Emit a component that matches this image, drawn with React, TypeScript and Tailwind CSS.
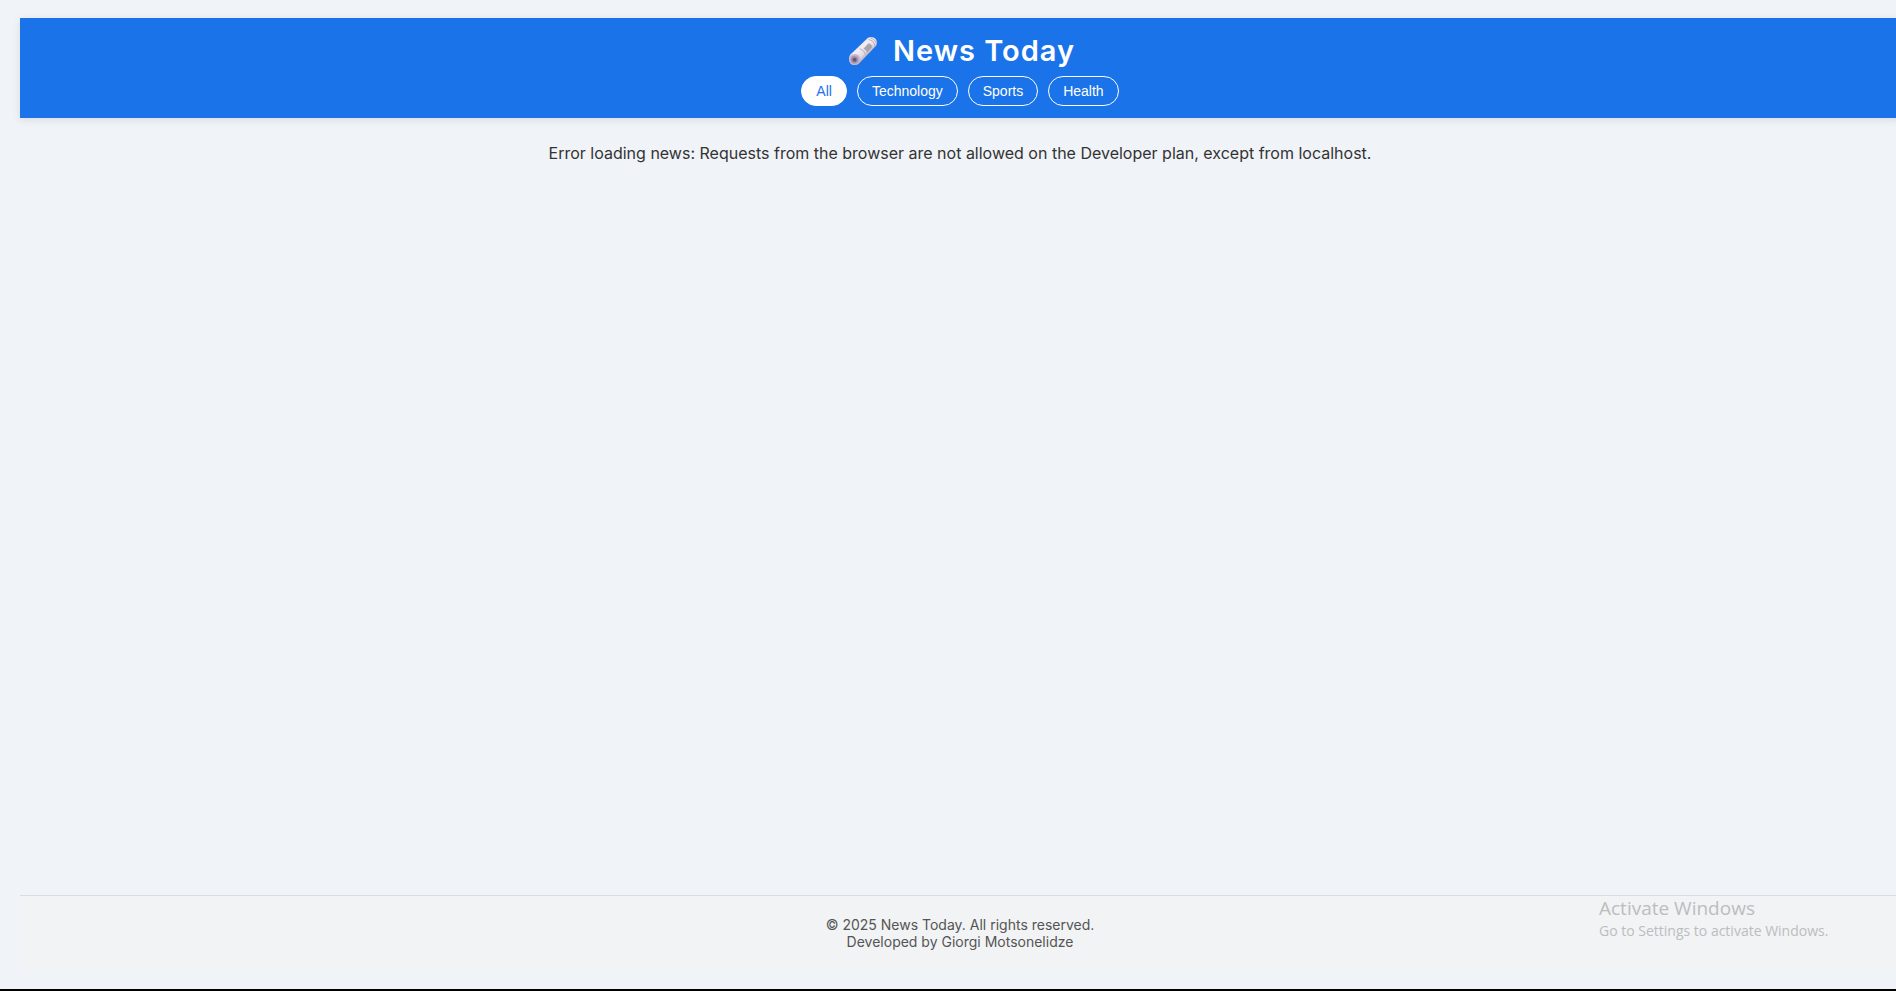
import { useState } from "react";

const categories = ["All", "Technology", "Sports", "Health"];

function RolledNewspaper() {
  return (
    <svg viewBox="0 0 28 28" className="h-7 w-7 shrink-0" aria-hidden="true">
      <defs>
        <linearGradient id="roll" x1="8" y1="7" x2="19" y2="19" gradientUnits="userSpaceOnUse">
          <stop offset="0" stopColor="#cfc4d6" />
          <stop offset="0.3" stopColor="#f3eff5" />
          <stop offset="0.7" stopColor="#e2dce6" />
          <stop offset="1" stopColor="#b5a6c0" />
        </linearGradient>
      </defs>
      <path d="M1.4 17.4 17.6 1.9C19.3.2 22.5 0 25 .7 27.6 1.5 28.5 5.5 27.5 8.2L10.6 26C8.5 28.4 4.5 28.6 2 27 0 25.5-.6 20 1.4 17.4Z" fill="url(#roll)" />
      <path d="M14.4 11.8 19.6 6.2Q22.6 7 23.4 10L18 16Q17.4 12.8 14.4 11.8Z" fill="#aaa4ad" />
      <path d="M19.6 2.6Q24.8 3 26.2 9.4M21.6 1.2Q26.3 1.8 27.6 7.1" fill="none" stroke="#b5abba" strokeWidth="0.9" />
      <path d="M10.7 11.6Q15.6 13.1 16.8 18.3" fill="none" stroke="#b8adbd" strokeWidth="1" />
      <ellipse cx="5.7" cy="22.4" rx="5.5" ry="5.5" fill="#c3b2cf" />
      <circle cx="5.5" cy="22.8" r="3.7" fill="#a291ae" />
      <circle cx="5.6" cy="22.8" r="2" fill="#655870" />
    </svg>
  );
}

export default function App() {
  const [active, setActive] = useState("All");

  return (
    <div className="flex min-h-screen flex-col overflow-hidden border-b-2 border-black bg-[#f0f4f8] pt-[18px] font-['Inter',sans-serif] text-[#333333]">
      <div className="-mr-1 ml-5 flex grow flex-col">
        <header className="flex flex-col items-center bg-[#1a73e8] pt-4 pb-3 text-white shadow-[0_2px_8px_rgba(0,0,0,0.1)]">
          <h1 className="flex items-center gap-4 pb-2 pl-1 text-[29px] leading-[34px] font-semibold tracking-[1px]">
            <RolledNewspaper />
            News Today
          </h1>
          <nav aria-label="News categories" className="flex gap-[10px]">
            {categories.map((category) => (
              <button
                key={category}
                type="button"
                aria-pressed={active === category}
                onClick={() => setActive(category)}
                className={`rounded-full border border-white px-[14px] py-[6px] font-['Liberation_Sans',sans-serif] text-sm leading-4 ${
                  active === category ? "bg-white text-[#1a73e8]" : "bg-transparent text-white"
                }`}
              >
                {category}
              </button>
            ))}
          </nav>
        </header>

        <main className="grow px-5 pt-6 text-center">
          <p className="text-base leading-[22px]">
            Error loading news: Requests from the browser are not allowed on the Developer plan, except from localhost.
          </p>
        </main>

        <footer className="relative mb-[19px] border-t border-[#dddddd] bg-[#f1f3f4] py-5 text-center text-sm leading-[17px] text-[#555555]">
          <p>© 2025 News Today. All rights reserved.</p>
          <p>Developed by Giorgi Motsonelidze</p>
          <div className="absolute top-0 right-[65px] w-[236px] text-left font-['Open_Sans',sans-serif] whitespace-nowrap text-[#bcbdbf]">
            <p className="text-[19px] leading-6">Activate Windows</p>
            <p className="text-sm leading-[22px]">Go to Settings to activate Windows.</p>
          </div>
        </footer>
      </div>
    </div>
  );
}
